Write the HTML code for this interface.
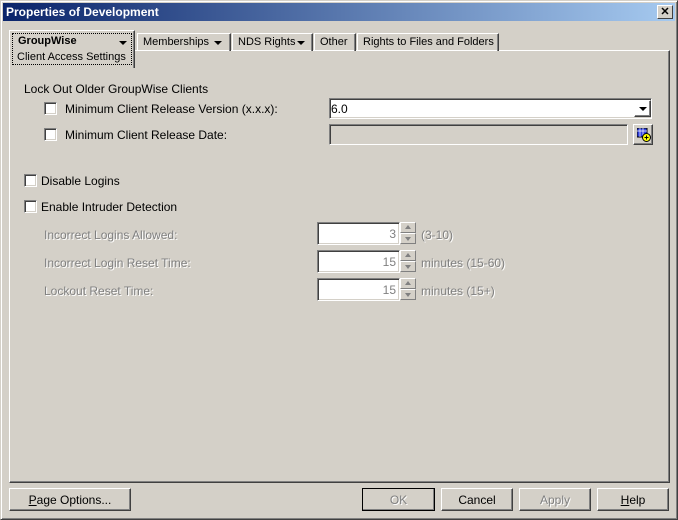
<!DOCTYPE html>
<html><head><style>
*{margin:0;padding:0;box-sizing:border-box}
body{width:678px;height:520px;background:#d4d0c8;font:12px "Liberation Sans",Arial,sans-serif;color:#000;position:relative;overflow:hidden}
.a{position:absolute;white-space:nowrap}
.win{left:0;top:0;width:678px;height:520px;border:1px solid;border-color:#d4d0c8 #404040 #404040 #d4d0c8;box-shadow:inset 1px 1px #fff,inset -1px -1px #808080}
.title{left:3px;top:3px;width:672px;height:18px;background:linear-gradient(90deg,#0a246a,#a6caf0);color:#fff;font-weight:bold;font-size:12px;line-height:18px;padding-left:3px}
.close{left:657px;top:5px;width:16px;height:14px;background:#d4d0c8;border:1px solid;border-color:#fff #404040 #404040 #fff;font-size:11px;line-height:12px;text-align:center;color:#000;font-weight:bold}
.tab{top:33px;height:18px;border:1px solid;border-color:#fff #404040 transparent #fff;border-bottom:none;line-height:16px;padding-left:5px;box-shadow:inset -1px 0 #808080;font-size:11px}
.panel{left:9px;top:50px;width:661px;height:433px;border:1px solid;border-color:#fff #404040 #404040 #fff;box-shadow:inset -1px -1px #808080}
.cb{width:13px;height:13px;background:#fff;border:1px solid;border-color:#808080 #fff #fff #808080;box-shadow:inset 1px 1px #404040,inset -1px -1px #d4d0c8}
.sunk{background:#fff;border:1px solid;border-color:#808080 #fff #fff #808080;box-shadow:inset 1px 1px #404040,inset -1px -1px #d4d0c8}
.btn{height:23px;border:1px solid;border-color:#fff #404040 #404040 #fff;box-shadow:inset -1px -1px #808080;text-align:center;line-height:21px}
.dis{color:#808080;text-shadow:1px 1px #fff}
.arr{width:0;height:0;border-left:4px solid transparent;border-right:4px solid transparent;border-top:4px solid #000}
.spin{width:16px;height:11px;background:#d4d0c8;border:1px solid;border-color:#fff #808080 #808080 #fff}
.up{position:absolute;left:4px;top:2px;width:0;height:0;border-left:3px solid transparent;border-right:3px solid transparent;border-bottom:4px solid #808080}
.dn{position:absolute;left:4px;top:3px;width:0;height:0;border-left:3px solid transparent;border-right:3px solid transparent;border-top:4px solid #808080}
</style></head><body>
<div class="a win"></div>
<div class="a title">Properties of Development</div>
<div class="a close">✕</div>

<div class="a panel"></div>
<div class="a tab" style="left:137px;width:94px">Memberships<span class="a arr" style="left:76px;top:7px"></span></div>
<div class="a tab" style="left:232px;width:81px">NDS Rights<span class="a arr" style="left:64px;top:7px"></span></div>
<div class="a tab" style="left:314px;width:42px">Other</div>
<div class="a tab" style="left:357px;width:142px">Rights to Files and Folders</div>
<div class="a" style="left:9px;top:30px;width:126px;height:38px;background:#d4d0c8;border:1px solid;border-color:#fff #404040 transparent #fff;border-bottom:none;box-shadow:inset -1px 0 #808080"></div>
<div class="a" style="left:12px;top:33px;width:120px;height:32px;border:1px dotted #000"></div>
<div class="a" style="left:18px;top:35px;font-weight:bold;font-size:11px">GroupWise</div>
<div class="a arr" style="left:119px;top:41px"></div>
<div class="a" style="left:17px;top:51px;font-size:11px">Client Access Settings</div>

<div class="a" style="left:24px;top:82px">Lock Out Older GroupWise Clients</div>
<div class="a cb" style="left:44px;top:102px"></div>
<div class="a" style="left:65px;top:102px">Minimum Client Release Version (x.x.x):</div>
<div class="a sunk" style="left:329px;top:98px;width:323px;height:21px"></div>
<div class="a" style="left:331px;top:102px">6.0</div>
<div class="a btn" style="left:634px;top:100px;width:17px;height:17px"><span class="a arr" style="left:4px;top:6px"></span></div>
<div class="a cb" style="left:44px;top:128px"></div>
<div class="a" style="left:65px;top:128px">Minimum Client Release Date:</div>
<div class="a" style="left:329px;top:124px;width:299px;height:21px;border:1px solid;border-color:#808080 #fff #fff #808080;box-shadow:inset 1px 1px #404040"></div>
<div class="a btn" style="left:633px;top:124px;width:20px;height:21px">
<svg class="a" style="left:3px;top:3px" width="14" height="14"><rect x="0" y="0" width="10" height="9" fill="#3040e0" stroke="#000"/><path d="M0 3h10M3 0v9M6 0v9" stroke="#fff" stroke-width=".7"/><circle cx="9.5" cy="9.5" r="4" fill="#ff0" stroke="#000"/><path d="M9.5 7.5v4M7.5 9.5h4" stroke="#000"/></svg></div>

<div class="a cb" style="left:24px;top:174px"></div>
<div class="a" style="left:41px;top:174px">Disable Logins</div>
<div class="a cb" style="left:24px;top:200px"></div>
<div class="a" style="left:41px;top:200px">Enable Intruder Detection</div>

<div class="a dis" style="left:44px;top:228px">Incorrect Logins Allowed:</div>
<div class="a dis" style="left:44px;top:256px">Incorrect Login Reset Time:</div>
<div class="a dis" style="left:44px;top:284px">Lockout Reset Time:</div>

<div class="a sunk" style="left:317px;top:222px;width:83px;height:23px;text-align:right;padding:4px 3px 0 0;color:#808080">3</div>
<div class="a spin" style="left:400px;top:222px"><i class="up"></i></div><div class="a spin" style="left:400px;top:233px"><i class="dn"></i></div>
<div class="a dis" style="left:421px;top:228px">(3-10)</div>
<div class="a sunk" style="left:317px;top:250px;width:83px;height:23px;text-align:right;padding:4px 3px 0 0;color:#808080">15</div>
<div class="a spin" style="left:400px;top:250px"><i class="up"></i></div><div class="a spin" style="left:400px;top:261px"><i class="dn"></i></div>
<div class="a dis" style="left:421px;top:256px">minutes (15-60)</div>
<div class="a sunk" style="left:317px;top:278px;width:83px;height:23px;text-align:right;padding:4px 3px 0 0;color:#808080">15</div>
<div class="a spin" style="left:400px;top:278px"><i class="up"></i></div><div class="a spin" style="left:400px;top:289px"><i class="dn"></i></div>
<div class="a dis" style="left:421px;top:284px">minutes (15+)</div>

<div class="a btn" style="left:9px;top:488px;width:122px;line-height:22px"><u>P</u>age Options...</div>
<div class="a btn dis" style="left:362px;top:488px;width:73px;border-color:#000;line-height:22px">OK</div>
<div class="a btn" style="left:441px;top:488px;width:72px;line-height:22px">Cancel</div>
<div class="a btn dis" style="left:519px;top:488px;width:72px;line-height:22px">Apply</div>
<div class="a btn" style="left:597px;top:488px;width:72px;line-height:22px"><u>H</u>elp</div>
</body></html>
